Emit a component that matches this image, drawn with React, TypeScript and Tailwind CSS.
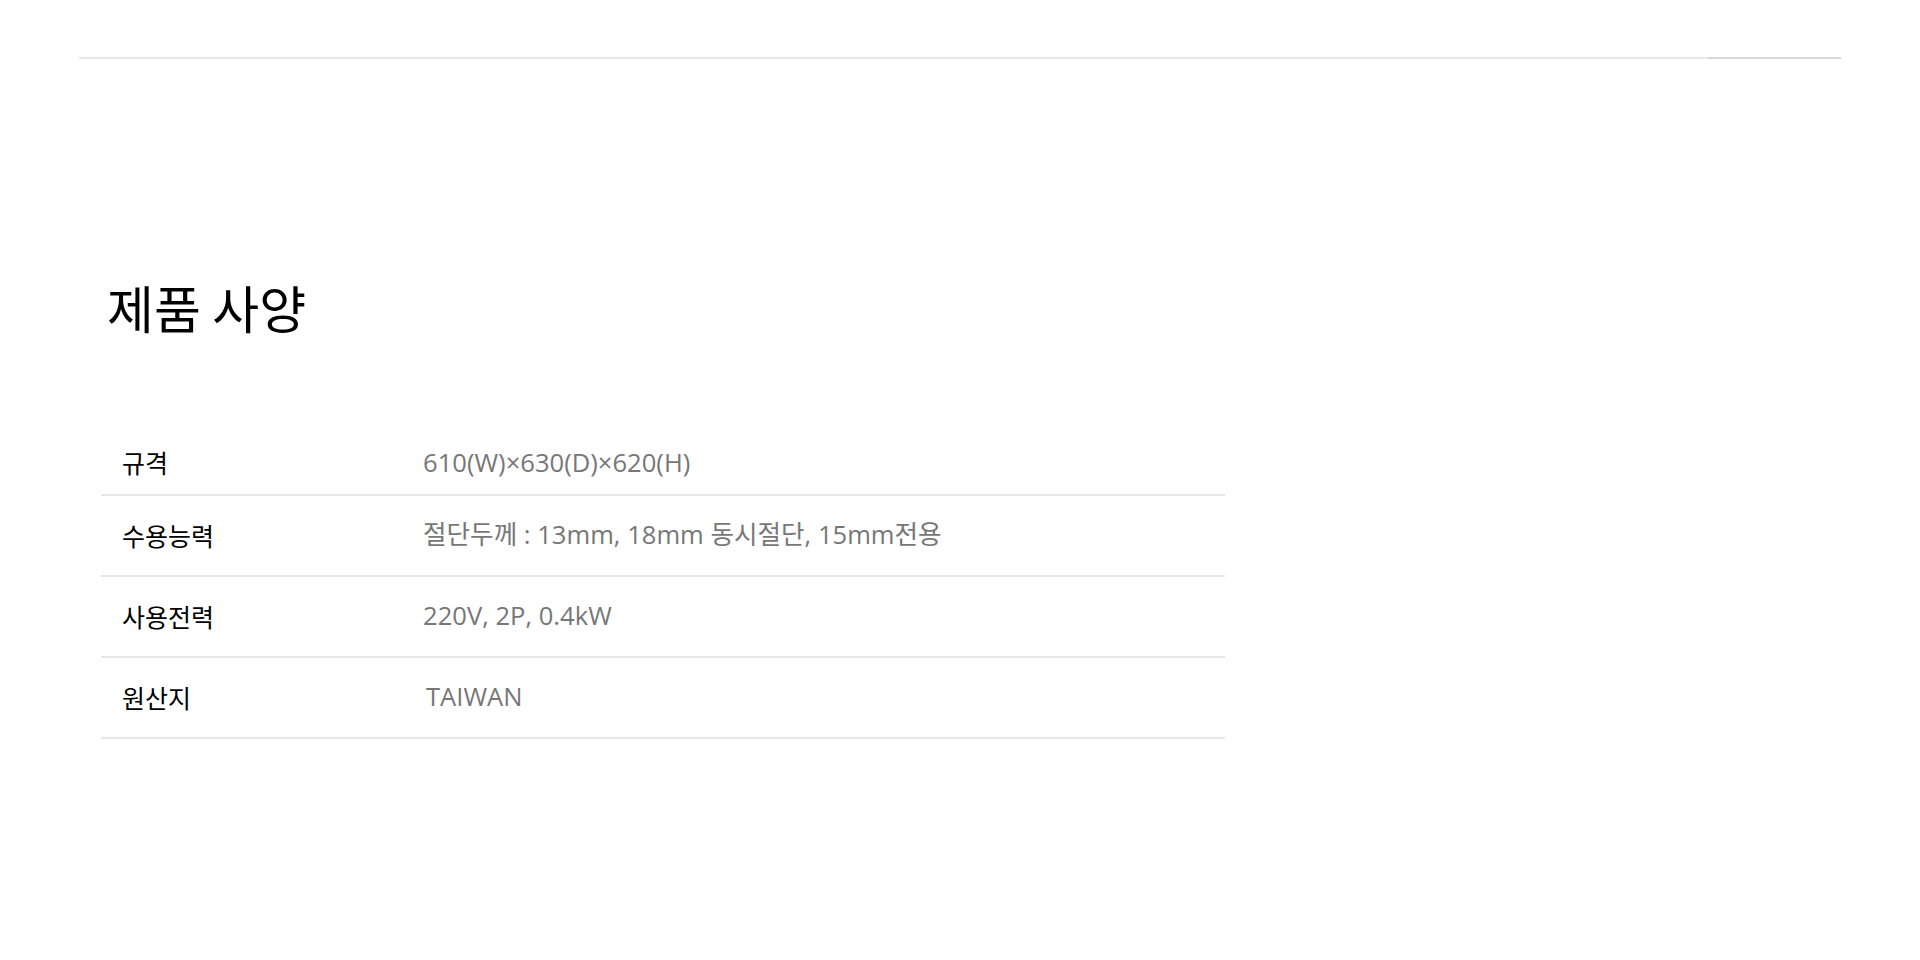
import React from 'react';

const specs = [
  { label: '규격', value: '610(W)×630(D)×620(H)' },
  { label: '수용능력', value: '절단두께 : 13mm, 18mm 동시절단, 15mm전용' },
  { label: '사용전력', value: '220V, 2P, 0.4kW' },
  { label: '원산지', value: 'TAIWAN', indent: true },
];

export default function App() {
  return (
    <div className="min-h-screen bg-white font-['Open_Sans','Noto_Sans_CJK_KR',sans-serif]">
      {/* 상단 구분선 */}
      <div className="pt-[57px] px-[79px]">
        <div className="flex h-[2px]">
          <div className="flex-1 bg-[#e8e8e8]" />
          <div className="w-[133px] bg-[#d8d8d8]" />
        </div>
      </div>

      {/* 제품 사양 */}
      <div className="pl-[101px] pt-[216px]">
        <h2 className="pl-[6px] text-[51px] leading-[64px] text-black font-['Noto_Sans_CJK_KR',sans-serif]">
          제품 사양
        </h2>

        <div className="mt-[93px] w-[1124px]">
          {specs.map((row, i) => (
            <div
              key={row.label}
              className={`flex items-center border-b-2 border-[#e6e6e6] ${i === 0 ? 'h-[64px]' : 'h-[81px]'}`}
            >
              <div className="w-[322px] pl-[21px] text-[25px] text-black font-['Noto_Sans_CJK_KR',sans-serif]">
                {row.label}
              </div>
              <div className={`text-[25.6px] text-[#777] ${row.indent ? 'pl-[3px]' : ''}`}>{row.value}</div>
            </div>
          ))}
        </div>
      </div>
    </div>
  );
}
